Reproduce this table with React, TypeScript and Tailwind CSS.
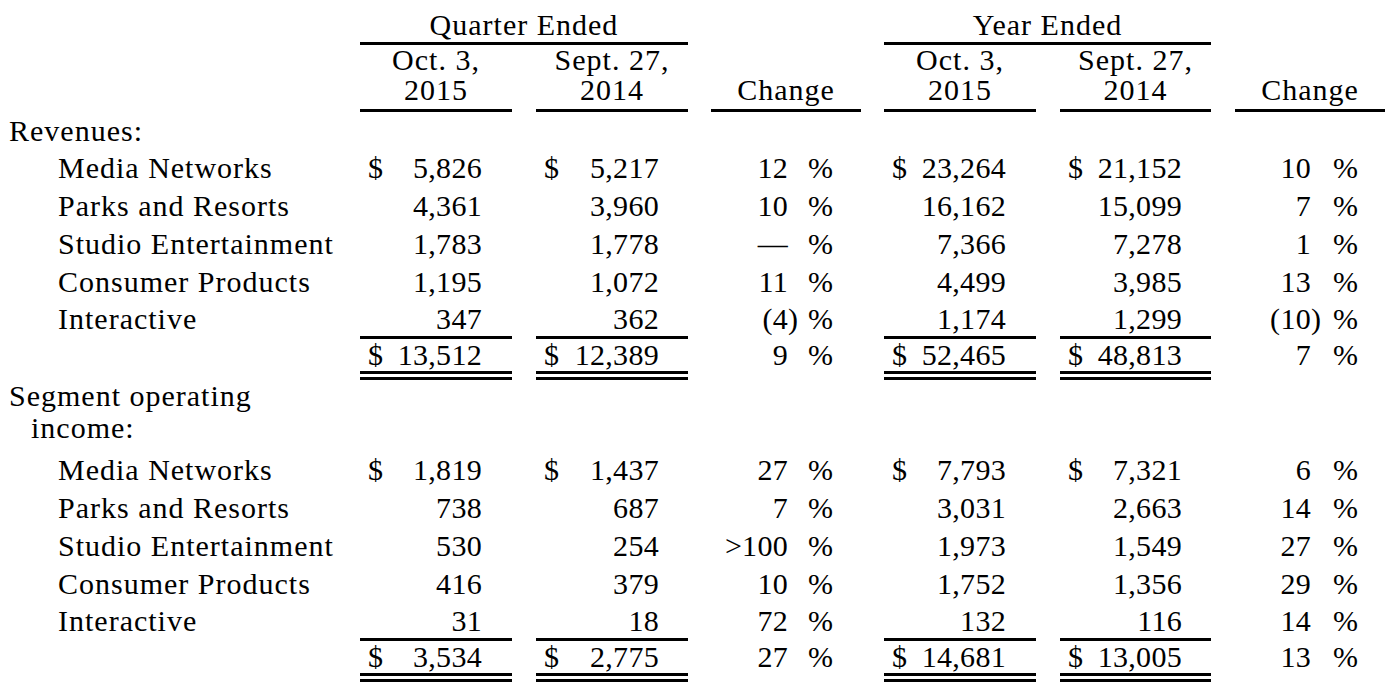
import React from 'react';

type Line = 'none' | 'single' | 'double';

interface Fig {
    label: string;
    q1: string;
    q2: string;
    qc: string;
    y1: string;
    y2: string;
    yc: string;
    dollar?: boolean;
}

const revenues: Fig[] = [
    { label: 'Media Networks', q1: '5,826', q2: '5,217', qc: '12', y1: '23,264', y2: '21,152', yc: '10', dollar: true },
    { label: 'Parks and Resorts', q1: '4,361', q2: '3,960', qc: '10', y1: '16,162', y2: '15,099', yc: '7' },
    { label: 'Studio Entertainment', q1: '1,783', q2: '1,778', qc: '—', y1: '7,366', y2: '7,278', yc: '1' },
    { label: 'Consumer Products', q1: '1,195', q2: '1,072', qc: '11', y1: '4,499', y2: '3,985', yc: '13' },
    { label: 'Interactive', q1: '347', q2: '362', qc: '(4)', y1: '1,174', y2: '1,299', yc: '(10)' },
];
const revenueTotal: Fig = { label: '', q1: '13,512', q2: '12,389', qc: '9', y1: '52,465', y2: '48,813', yc: '7', dollar: true };

const income: Fig[] = [
    { label: 'Media Networks', q1: '1,819', q2: '1,437', qc: '27', y1: '7,793', y2: '7,321', yc: '6', dollar: true },
    { label: 'Parks and Resorts', q1: '738', q2: '687', qc: '7', y1: '3,031', y2: '2,663', yc: '14' },
    { label: 'Studio Entertainment', q1: '530', q2: '254', qc: '>100', y1: '1,973', y2: '1,549', yc: '27' },
    { label: 'Consumer Products', q1: '416', q2: '379', qc: '10', y1: '1,752', y2: '1,356', yc: '29' },
    { label: 'Interactive', q1: '31', q2: '18', qc: '72', y1: '132', y2: '116', yc: '14' },
];
const incomeTotal: Fig = { label: '', q1: '3,534', q2: '2,775', qc: '27', y1: '14,681', y2: '13,005', yc: '13', dollar: true };

const lineClass = (line: Line) =>
    line === 'double'
        ? 'border-b-[9px] border-double border-black'
        : line === 'single'
            ? 'border-b-[3px] border-black'
            : '';

// row metrics: content height / line-height
const rowSize = (line: Line) =>
    line === 'double' ? 'h-[41px] leading-[32px]' : line === 'single' ? 'h-[38px] leading-[35px]' : 'h-[38px] leading-[38px]';

const Money = ({ value, dollar, line, outer, inner, pr }: { value: string; dollar?: boolean; line: Line; outer: string; inner: string; pr: string }) => (
    <div className={outer}>
        <div className={`${inner} ${rowSize(line)} ${lineClass(line)} flex justify-between pl-[8px] ${pr} tracking-[0.3px] whitespace-nowrap`}>
            <span>{dollar ? '$' : ''}</span>
            <span>{value}</span>
        </div>
    </div>
);

const Pct = ({ value, line, outer, num, gap }: { value: string; line: Line; outer: string; num: string; gap: string }) => {
    const hang = value.endsWith(')');
    return (
        <div className={`${outer} ${rowSize(line)} ${line === 'none' ? '' : 'border-b-[3px] border-transparent'} flex whitespace-nowrap tracking-[0.3px]`}>
            <span className={`${num} text-right`}>
                {hang ? value.slice(0, -1) : value}
                {hang && <span className="inline-block w-0">)</span>}
            </span>
            <span className={gap}>%</span>
        </div>
    );
};

const DataRow = ({ fig, line }: { fig: Fig; line: Line }) => (
    <div className="flex items-start">
        <div className={`w-[360px] pl-[58px] tracking-[1px] whitespace-nowrap ${rowSize(line)}`}>{fig.label}</div>
        <Money value={fig.q1} dollar={fig.dollar} line={line} outer="w-[176px]" inner="w-[152px]" pr="pr-[30px]" />
        <Money value={fig.q2} dollar={fig.dollar} line={line} outer="w-[175px]" inner="w-[152px]" pr="pr-[29px]" />
        <Pct value={fig.qc} line={line} outer="w-[173px]" num="w-[77px]" gap="ml-[20px]" />
        <Money value={fig.y1} dollar={fig.dollar} line={line} outer="w-[176px]" inner="w-[152px]" pr="pr-[30px]" />
        <Money value={fig.y2} dollar={fig.dollar} line={line} outer="w-[175px]" inner="w-[151px]" pr="pr-[29px]" />
        <Pct value={fig.yc} line={line} outer="w-[150px]" num="w-[76px]" gap="ml-[22px]" />
    </div>
);

const Section = ({ rows, total }: { rows: Fig[]; total: Fig }) => (
    <>
        {rows.map((r, i) => (
            <DataRow key={r.label} fig={r} line={i === rows.length - 1 ? 'single' : 'none'} />
        ))}
        <DataRow fig={total} line="double" />
    </>
);

const DateHead = ({ top, bottom, outer, inner }: { top: string; bottom: string; outer: string; inner: string }) => (
    <div className={outer}>
        <div className={`${inner} h-[67px] pb-[4px] border-b-[3px] border-black text-center leading-[30px] tracking-[1px]`}>
            <div className="h-[30px]">{top}</div>
            <div className="h-[30px]">{bottom}</div>
        </div>
    </div>
);

export default function App() {
    return (
        <div className="w-[1395px] h-[695px] bg-white text-black font-['Liberation_Serif',serif] text-[30px] overflow-hidden">
            {/* period headers */}
            <div className="flex">
                <div className="w-[360px]" />
                <div className="w-[351px]">
                    <div className="w-[328px] h-[45px] pt-[10px] border-b-[3px] border-black text-center leading-[30px] tracking-[1px]">Quarter Ended</div>
                </div>
                <div className="w-[173px]" />
                <div className="w-[351px]">
                    <div className="w-[327px] h-[45px] pt-[10px] border-b-[3px] border-black text-center leading-[30px] tracking-[1px]">Year Ended</div>
                </div>
            </div>

            {/* date headers */}
            <div className="flex">
                <div className="w-[360px]" />
                <DateHead top="Oct. 3," bottom="2015" outer="w-[176px]" inner="w-[152px]" />
                <DateHead top="Sept. 27," bottom="2014" outer="w-[175px]" inner="w-[152px]" />
                <DateHead top="" bottom="Change" outer="w-[173px]" inner="w-[150px]" />
                <DateHead top="Oct. 3," bottom="2015" outer="w-[176px]" inner="w-[152px]" />
                <DateHead top="Sept. 27," bottom="2014" outer="w-[175px]" inner="w-[151px]" />
                <DateHead top="" bottom="Change" outer="w-[150px]" inner="w-[150px]" />
            </div>

            <div className="h-[37px] leading-[37px] pl-[9px] tracking-[1px]">Revenues:</div>
            <Section rows={revenues} total={revenueTotal} />

            <div className="h-[71px] leading-[32px] tracking-[1px]">
                <div className="pl-[9px]">Segment operating</div>
                <div className="pl-[31px]">income:</div>
            </div>
            <Section rows={income} total={incomeTotal} />
        </div>
    );
}
